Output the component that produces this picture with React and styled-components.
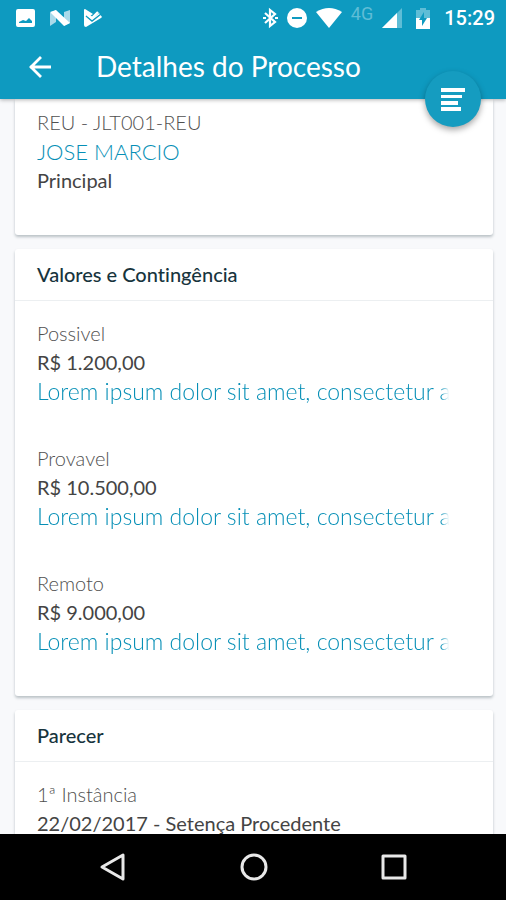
import React from "react";
import styled, { createGlobalStyle } from "styled-components";

const GlobalStyle = createGlobalStyle`
  *, *::before, *::after { box-sizing: border-box; }
  body {
    margin: 0;
    background: #f8f9fb;
    font-family: Lato, "Open Sans", sans-serif;
    font-variant-ligatures: none;
  }
  button { border: 0; padding: 0; background: none; color: inherit; cursor: pointer; }
  svg { display: block; flex: none; }
`;

const Screen = styled.div`
  display: flex;
  flex-direction: column;
  height: 100vh;
  overflow: hidden;
`;

const TopArea = styled.header`
  position: relative;
  z-index: 1;
  flex: none;
  background: #0e9ac0;
  color: #fff;
  box-shadow: 0 1px 4px rgba(0, 0, 0, 0.3);
`;

const StatusBar = styled.div`
  display: flex;
  align-items: center;
  justify-content: space-between;
  height: 36px;
  padding: 0 11px 0 15px;
`;

const StatusGroup = styled.div`
  display: flex;
  align-items: center;
  gap: ${({ $gap }) => $gap}px;
`;

const Network = styled.span`
  align-self: flex-start;
  color: #5fbdd6;
  font: 400 18px/16px Roboto, sans-serif;
`;

const Clock = styled.time`
  font: 500 20px/24px Roboto, sans-serif;
`;

const Toolbar = styled.div`
  display: flex;
  align-items: center;
  gap: 40px;
  height: 63px;
  padding: 0 24px 4px;
`;

const BackButton = styled.button`
  width: 32px;
  height: 32px;
`;

const Title = styled.h1`
  margin: 0;
  font-size: 28px;
  line-height: 36px;
  font-weight: 400;
`;

const Fab = styled.button`
  position: absolute;
  right: 25px;
  bottom: -28px;
  display: grid;
  place-items: center;
  width: 56px;
  height: 56px;
  border-radius: 50%;
  background: #159cc0;
  box-shadow: 0 3px 6px rgba(0, 0, 0, 0.35);
`;

const Content = styled.main`
  display: flex;
  flex: 1;
  flex-direction: column;
  gap: 14px;
  min-height: 0;
  overflow: hidden;
  padding: 0 13px 0 15px;
`;

const Card = styled.section`
  flex: none;
  background: #fff;
  border-radius: ${({ $continued }) => ($continued ? "0 0 3px 3px" : "3px")};
  box-shadow: 0 2px 3px rgba(30, 50, 60, 0.28);
`;

const CardTitle = styled.h2`
  margin: 0;
  padding: 11px 22px;
  border-bottom: 1px solid #eceff1;
  color: #17343d;
  font-size: 20px;
  line-height: 29px;
  font-weight: 500;
`;

const CardBody = styled.div`
  padding: ${({ $top }) => $top}px 44px 2px 22px;
`;

const Entry = styled.div`
  padding-bottom: 38px;
`;

const Line = styled.p`
  margin: 0;
  overflow: hidden;
  white-space: nowrap;
  font-size: 20px;
  line-height: 29px;
`;

const Label = styled(Line)`
  color: #505050;
  font-weight: 300;
`;

const Value = styled(Line)`
  color: #444;
`;

const PartyName = styled(Line)`
  color: #068fb6;
  font-size: 22px;
  font-weight: 300;
`;

const Description = styled(Line)`
  color: #068fb6;
  font-size: 23px;
  font-weight: 300;
  mask-image: linear-gradient(to left, transparent, #000 8px);
`;

const NavBar = styled.nav`
  display: flex;
  flex: none;
  align-items: center;
  justify-content: center;
  gap: 108px;
  height: 66px;
  background: #000;
  color: #e8e8e8;
`;

const NavButton = styled.button`
  width: 32px;
  height: 32px;
`;

const amounts = [
  { label: "Possivel", value: "R$ 1.200,00" },
  { label: "Provavel", value: "R$ 10.500,00" },
  { label: "Remoto", value: "R$ 9.000,00" },
];

const PictureIcon = () => (
  <svg width="22" height="20" viewBox="0 0 22 20" aria-hidden="true">
    <path fill="#fff" fillRule="evenodd" d="M3 1h15q2 0 2 2v14q0 2-2 2H3q-2 0-2-2V3q0-2 2-2zm1 14h13v-2l-3-3-3 3-3-1-4 2z" />
  </svg>
);

const NougatIcon = () => (
  <svg width="22" height="18" viewBox="0 0 22 18" aria-hidden="true">
    <path fill="#a9daea" d="M1 4l6-3v12l-6 4zM15 3l6-2v13l-6 3z" />
    <path fill="#fff" d="M1 3l6-2 14 13-6 3z" />
  </svg>
);

const PlayCheckIcon = () => (
  <svg width="20" height="20" viewBox="0 0 20 20" aria-hidden="true">
    <path fill="#fff" d="M1 2q0-1 1-1l8 5-3 2 3 2 6-5 3 4-1 1L3 19q-2 0-2-2z" />
    <path fill="none" stroke="#0e9ac0" strokeWidth="1.4" d="M3 8l6 5 9-7" />
    <path fill="none" stroke="#fff" strokeWidth="2.4" d="M5 7l4 3 6-6" />
  </svg>
);

const BluetoothIcon = () => (
  <svg width="15" height="22" viewBox="0 0 15 22" fill="none" stroke="#fff" strokeWidth="2.2" aria-hidden="true">
    <path d="M2 6l10 9-5 4V3l5 4L2 16" />
    <path d="M0 11h3M12 11h3" />
  </svg>
);

const DndIcon = () => (
  <svg width="20" height="20" viewBox="0 0 20 20" aria-hidden="true">
    <circle cx="10" cy="10" r="10" fill="#fff" />
    <path fill="#0e9ac0" d="M5 9h10v2H5z" />
  </svg>
);

const WifiIcon = () => (
  <svg width="26" height="20" viewBox="0 0 26 20" aria-hidden="true">
    <path fill="#fff" d="M0 4Q13-4 26 4L13 20z" />
  </svg>
);

const SignalIcon = () => (
  <svg width="20" height="20" viewBox="0 0 20 20" aria-hidden="true">
    <path fill="#5fbdd6" d="M20 0v20H0z" />
    <path fill="#fff" d="M15 5v15H0z" />
  </svg>
);

const BatteryIcon = () => (
  <svg width="14" height="21" viewBox="0 0 14 21" aria-hidden="true">
    <path fill="#5fbdd6" d="M4 0h6v2h4v9H0V2h4z" />
    <path fill="#fff" d="M0 10h14v11H0z" />
    <path fill="#0e9ac0" d="M8 4v6h3l-5 8v-6H3z" />
  </svg>
);

const PowerGroup = styled(StatusGroup)`
  margin-left: 5px;
`;

const BackArrow = () => (
  <svg width="32" height="32" viewBox="0 0 32 32" fill="none" stroke="#fff" strokeWidth="2.8" aria-hidden="true">
    <path d="M27 17H6M17 7L7 17l10 10" />
  </svg>
);

const LinesIcon = () => (
  <svg width="24" height="24" viewBox="0 0 24 24" fill="#fff" aria-hidden="true">
    <path d="M0 1h24v4H0zM0 8h21v3H0zM0 14h17v4H0zM0 20h20v4H0z" />
  </svg>
);

const NavIcon = ({ children }) => (
  <svg width="32" height="32" viewBox="0 0 32 32" fill="none" stroke="currentColor" strokeWidth="3" strokeLinejoin="round" aria-hidden="true">
    {children}
  </svg>
);

export default function App() {
  return (
    <>
      <GlobalStyle />
      <Screen>
        <TopArea>
          <StatusBar>
            <StatusGroup $gap={12}>
              <PictureIcon />
              <NougatIcon />
              <PlayCheckIcon />
            </StatusGroup>
            <StatusGroup $gap={9}>
              <BluetoothIcon />
              <DndIcon />
              <WifiIcon />
              <Network>4G</Network>
              <SignalIcon />
              <PowerGroup $gap={14}>
                <BatteryIcon />
                <Clock>15:29</Clock>
              </PowerGroup>
            </StatusGroup>
          </StatusBar>
          <Toolbar>
            <BackButton aria-label="Voltar"><BackArrow /></BackButton>
            <Title>Detalhes do Processo</Title>
          </Toolbar>
          <Fab aria-label="Menu"><LinesIcon /></Fab>
        </TopArea>

        <Content>
          <Card $continued>
            <CardBody $top={9}>
              <Entry>
                <Label>REU - JLT001-REU</Label>
                <PartyName>JOSE MARCIO</PartyName>
                <Value>Principal</Value>
              </Entry>
            </CardBody>
          </Card>

          <Card>
            <CardTitle>Valores e Contingência</CardTitle>
            <CardBody $top={18}>
              {amounts.map(({ label, value }) => (
                <Entry key={label}>
                  <Label>{label}</Label>
                  <Value>{value}</Value>
                  <Description>Lorem ipsum dolor sit amet, consectetur adipiscing elit</Description>
                </Entry>
              ))}
            </CardBody>
          </Card>

          <Card>
            <CardTitle>Parecer</CardTitle>
            <CardBody $top={18}>
              <Entry>
                <Label>1ª Instância</Label>
                <Value>22/02/2017 - Setença Procedente</Value>
              </Entry>
            </CardBody>
          </Card>
        </Content>

        <NavBar>
          <NavButton aria-label="Voltar"><NavIcon><path d="M26 4v24L5 16z" /></NavIcon></NavButton>
          <NavButton aria-label="Início"><NavIcon><circle cx="17" cy="16" r="12" /></NavIcon></NavButton>
          <NavButton aria-label="Recentes"><NavIcon><path d="M6 5h22v22H6z" /></NavIcon></NavButton>
        </NavBar>
      </Screen>
    </>
  );
}
